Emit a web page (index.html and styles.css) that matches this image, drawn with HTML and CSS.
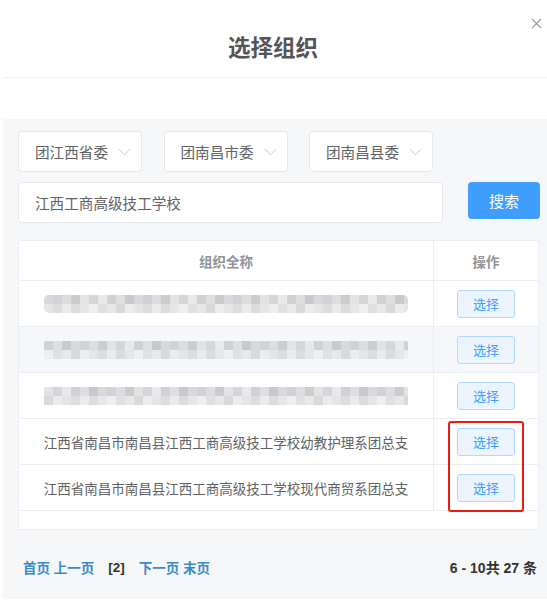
FILE: index.html
```html
<!DOCTYPE html>
<html lang="zh-CN">
<head>
  <meta charset="UTF-8" />
  <meta name="viewport" content="width=device-width, initial-scale=1.0"/>
  <title>选择组织</title>
  <link rel="stylesheet" href="styles.css">
</head>
<body>
  <div class="dialog">
    <div class="dialog-header">
      <h1 class="title">选择组织</h1>
    </div>
    <span class="close">
      <svg width="11" height="11" viewBox="0 0 11 11"><path d="M1 1l9 9M10 1l-9 9" stroke="#9a9a9a" stroke-width="1.1" fill="none"/></svg>
    </span>

    <div class="spacer"></div>

    <div class="panel">
      <div class="filters">
        <div class="select"><span>团江西省委</span><svg class="arrow" width="13" height="8" viewBox="0 0 13 8"><path d="M1 1.2l5.5 5.5 5.5-5.5" stroke="#c3c6cc" stroke-width="1" fill="none"/></svg></div>
        <div class="select"><span>团南昌市委</span><svg class="arrow" width="13" height="8" viewBox="0 0 13 8"><path d="M1 1.2l5.5 5.5 5.5-5.5" stroke="#c3c6cc" stroke-width="1" fill="none"/></svg></div>
        <div class="select"><span>团南昌县委</span><svg class="arrow" width="13" height="8" viewBox="0 0 13 8"><path d="M1 1.2l5.5 5.5 5.5-5.5" stroke="#c3c6cc" stroke-width="1" fill="none"/></svg></div>
      </div>

      <div class="search-row">
        <div class="search-input">江西工商高级技工学校</div>
        <button class="search-btn">搜索</button>
      </div>

      <div class="table">
        <div class="row head">
          <div class="cell name">组织全称</div>
          <div class="cell op">操作</div>
        </div>
        <div class="row">
          <div class="cell name"><span class="mosaic m1"></span></div>
          <div class="cell op"><button class="pick">选择</button></div>
        </div>
        <div class="row striped">
          <div class="cell name"><span class="mosaic m2"></span></div>
          <div class="cell op"><button class="pick">选择</button></div>
        </div>
        <div class="row">
          <div class="cell name"><span class="mosaic m3"></span></div>
          <div class="cell op"><button class="pick">选择</button></div>
        </div>
        <div class="row">
          <div class="cell name">江西省南昌市南昌县江西工商高级技工学校幼教护理系团总支</div>
          <div class="cell op"><button class="pick">选择</button></div>
        </div>
        <div class="row">
          <div class="cell name">江西省南昌市南昌县江西工商高级技工学校现代商贸系团总支</div>
          <div class="cell op"><button class="pick">选择</button></div>
        </div>
        <div class="table-rest"></div>
      </div>

      <div class="pager">
        <div class="pager-links">
          <a class="link">首页 上一页</a>
          <span class="current">[2]</span>
          <a class="link">下一页 末页</a>
        </div>
        <div class="count">6 - 10共 27 条</div>
      </div>
    </div>

    <div class="mark"></div>
  </div>
</body>
</html>
```

FILE: styles.css
```css
* {
  margin: 0;
  padding: 0;
  box-sizing: border-box;
}
html, body {
  width: 100%;
  height: 100%;
  overflow: hidden;
  background: #fff;
  font-family: "Liberation Sans", "Noto Sans CJK SC", sans-serif;
}

.dialog {
  position: relative;
  height: 603px;
  background: #fff;
}

.dialog-header {
  height: 78px;
  margin-left: 3px;
  padding-top: 15px;
  border-bottom: 1px solid #f0f1f3;
  display: flex;
  align-items: center;
  justify-content: center;
}

.title {
  font-size: 22.5px;
  font-weight: bold;
  color: #555;
  margin-right: 4px;
}

.close {
  position: absolute;
  top: 18px;
  right: 5px;
  line-height: 0;
}

.spacer {
  height: 41px;
}

.panel {
  margin-left: 3px;
  height: 480px;
  padding: 12px 7px 0 15px;
  background: #f6f7f9;
}

.filters {
  display: flex;
  gap: 21.5px;
}

.select {
  width: 124px;
  height: 41px;
  padding: 0 10px 0 16px;
  display: flex;
  align-items: center;
  justify-content: space-between;
  background: #fff;
  border: 1px solid #e4e7ed;
  border-radius: 4px;
  font-size: 14.6px;
  color: #606266;
}

.arrow {
  margin-top: 1px;
}

.search-row {
  display: flex;
  align-items: flex-start;
  margin-top: 10px;
}

.search-input {
  flex-shrink: 0;
  width: 425px;
  height: 41px;
  padding-left: 16px;
  display: flex;
  align-items: center;
  background: #fff;
  border: 1px solid #e4e7ed;
  border-radius: 4px;
  font-size: 14.6px;
  color: #606266;
}

.search-btn {
  flex-shrink: 0;
  width: 72px;
  height: 37px;
  margin-left: 25px;
  background: #409eff;
  border: none;
  border-radius: 4px;
  color: #fff;
  font-family: inherit;
  font-size: 15px;
}

.table {
  width: 521px;
  margin-top: 17px;
  background: #fff;
  border: 1px solid #ebeef5;
}

.row {
  display: grid;
  grid-template-columns: 415px 1fr;
  height: 46px;
  border-bottom: 1px solid #ebeef5;
}

.row.head {
  height: 40px;
}

.row.striped {
  background: #f5f7fa;
}

.cell {
  display: flex;
  align-items: center;
  justify-content: center;
  font-size: 13.5px;
  color: #606266;
}

.cell.name {
  border-right: 1px solid #ebeef5;
}

.head .cell {
  font-size: 13.5px;
  font-weight: bold;
  color: #909399;
}

.pick {
  width: 58px;
  height: 28px;
  background: #ecf5ff;
  border: 1px solid #b3d8ff;
  border-radius: 3px;
  color: #409eff;
  font-family: inherit;
  font-size: 13px;
}

.table-rest {
  height: 18px;
}

.mosaic {
  display: block;
  width: 364px;
  height: 18px;
  border-radius: 5px;
  background:
    linear-gradient(90deg, #d8d9dc 0 9px, #d1d2d5 9px 18px, #dcdde0 18px 27px, #cbccce 27px 36px, #e2e3e5 36px 45px, #d5d6d9 45px 54px, #e8e9eb 54px 63px, #d0d1d4 63px 72px, #dedfe1 72px 81px, #c8c9cc 81px 90px) 0 0 / 90px 9px repeat-x,
    linear-gradient(90deg, #e4e5e7 0 9px, #dcdddf 9px 18px, #eaebec 18px 27px, #dbdcde 27px 36px, #e5e6e8 36px 45px, #eeeff0 45px 54px, #dfe0e2 54px 63px, #e7e8ea 63px 72px, #d8d9db 72px 81px, #ebeced 81px 90px) 0 9px / 90px 9px repeat-x;
}

.mosaic.m2 {
  background-position: 27px 0, 45px 9px;
  border-radius: 2px;
}

.mosaic.m3 {
  background-position: 54px 0, 18px 9px;
  border-radius: 1px;
}

.pager {
  height: 69px;
  padding: 5px 3px 0 5px;
  display: flex;
  align-items: center;
  justify-content: space-between;
  font-size: 13.5px;
  font-weight: bold;
}

.pager-links {
  display: flex;
  align-items: center;
  gap: 14px;
}

.link {
  color: #3a8ac6;
}

.current {
  color: #333;
}

.count {
  font-size: 14px;
  color: #333;
}

.mark {
  position: absolute;
  left: 448px;
  top: 421px;
  width: 76px;
  height: 91px;
  border: 2px solid #f0190f;
  border-radius: 3px;
}
```
